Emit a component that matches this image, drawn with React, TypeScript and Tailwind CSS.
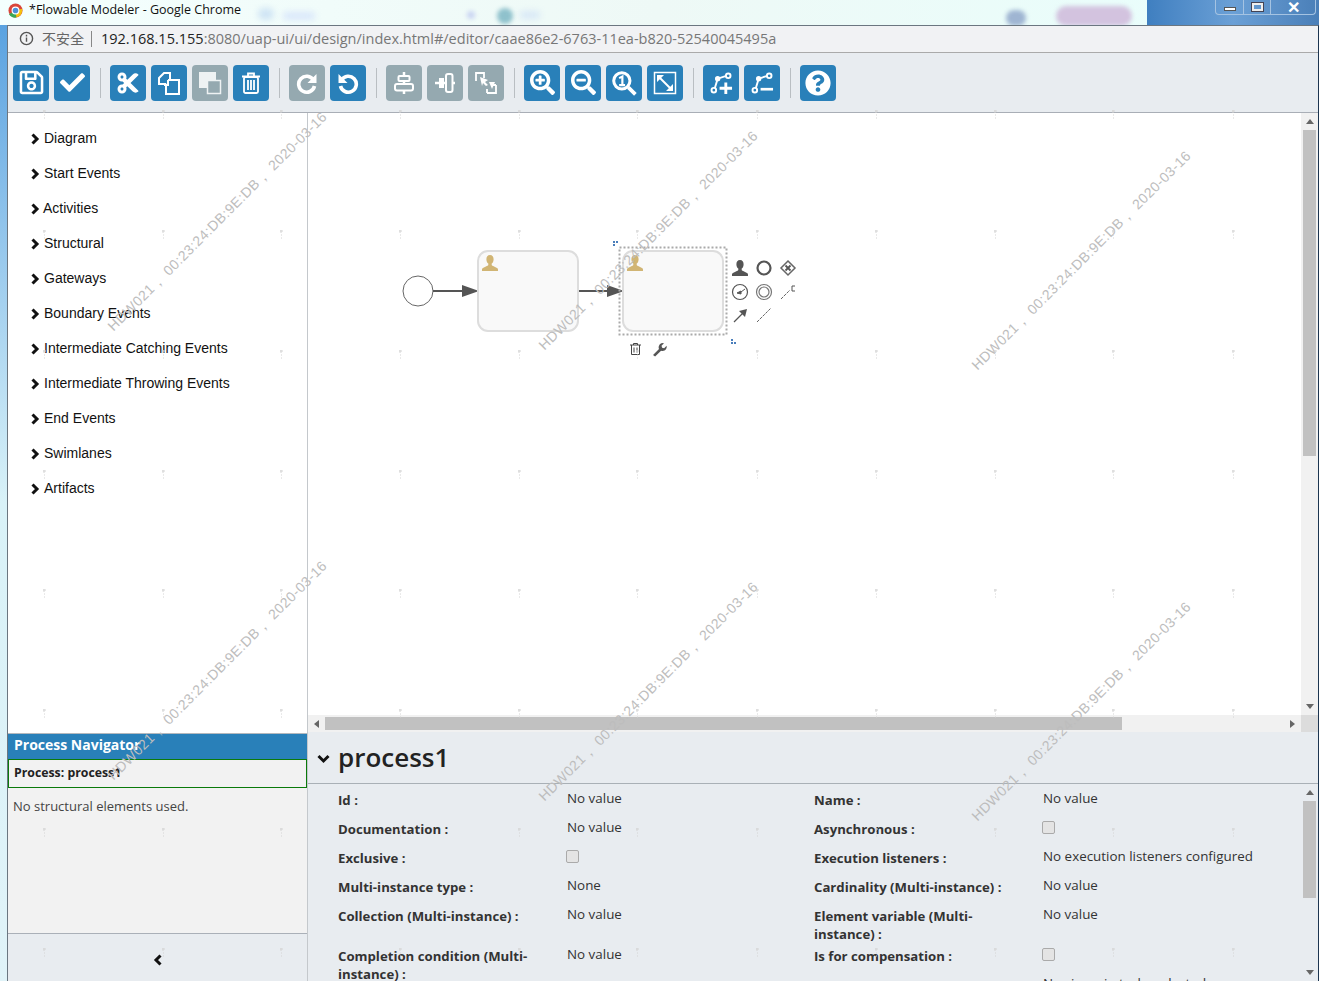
import React from "react";
import { FaRegSave, FaCheck, FaCut, FaSearchPlus, FaSearchMinus, FaQuestionCircle } from "react-icons/fa";

const Svg = ({ children, size = "w-6 h-6" }: { children: React.ReactNode; size?: string }) => (
    <svg viewBox="0 0 24 24" className={size} fill="none" stroke="white" strokeWidth="2">{children}</svg>
);

const Copy = () => (
    <Svg>
        <path d="M2 7l5-5h6v11H2z" />
        <path d="M11 9h11v14H9V13" fill="#2980b9" />
        <path d="M11 9v5H7" />
    </Svg>
);
const Paste = () => (
    <Svg>
        <rect x="1" y="1" width="17" height="16" fill="#eef2f3" stroke="none" />
        <rect x="9.500" y="9.500" width="13" height="13" fill="#95a9b0" strokeWidth="1.500" stroke="#eef2f3" />
    </Svg>
);
const Trash = () => (
    <Svg>
        <path d="M3 5.500h18M9 5V2.500h6V5" strokeWidth="1.800" />
        <rect x="5" y="6" width="14" height="16" rx="1.500" strokeWidth="1.800" />
        <path d="M9 9v10M12 9v10M15 9v10" strokeWidth="1.800" />
    </Svg>
);
const Redo = () => (
    <Svg>
        <path d="M18.500 9A8 8 0 1 0 19.500 15" strokeWidth="3.600" />
        <path d="M21.500 3v9h-9z" fill="white" stroke="none" />
    </Svg>
);
const Undo = () => (
    <Svg>
        <path d="M5.500 9A8 8 0 1 1 4.500 15" strokeWidth="3.600" />
        <path d="M2.500 3v9h9z" fill="white" stroke="none" />
    </Svg>
);
const AlignH = () => (
    <Svg>
        <path d="M12 1v22" strokeWidth="2.500" />
        <rect x="6.500" y="5" width="11" height="5" rx="1" fill="#95a9b0" strokeWidth="2" />
        <rect x="3" y="13" width="18" height="6.500" rx="2" fill="#95a9b0" strokeWidth="2" />
    </Svg>
);
const AlignV = () => (
    <Svg>
        <path d="M2 12h20" strokeWidth="2.500" />
        <rect x="6" y="7" width="5" height="10" fill="white" stroke="none" />
        <rect x="13" y="3" width="6.500" height="18" rx="2" fill="#95a9b0" strokeWidth="2" />
    </Svg>
);
const SameSize = () => (
    <Svg>
        <path d="M2 10V2h8v5M13 22v-4M22 14v8h-9M22 14h-5" strokeWidth="1.800" />
        <path d="M6 6l8 3-3 2 3 3-2 1-3-3-1 3zM18 18l-3-7h6z" fill="white" stroke="none" />
    </Svg>
);
const ZoomOne = () => (
    <svg viewBox="0 0 24 24" className="h-[26px] w-[26px]" fill="none" stroke="white" strokeWidth="2.800">
        <circle cx="10" cy="10" r="7.500" />
        <path d="M16 16l6.500 6.500" strokeWidth="3.400" />
        <path d="M7.500 7.500l3-1.500V14M7.500 14h5.500" strokeWidth="2" />
    </svg>
);
const ZoomFit = () => (
    <Svg>
        <rect x="1.500" y="1.500" width="21" height="21" strokeWidth="1.500" />
        <path d="M6 6l12 12" strokeWidth="2" />
        <path d="M4 4h7l-7 7zM20 20h-7l7-7z" fill="white" stroke="none" />
    </Svg>
);
const Bend = ({ minus }: { minus?: boolean }) => (
    <Svg size="h-[23px] w-[23px]">
        <circle cx="19" cy="5" r="2.400" />
        <circle cx="4" cy="20" r="2.400" />
        <circle cx="8" cy="8" r="1.800" fill="white" />
        <path d="M5 18L8 8l9-3" />
        {minus ? <path d="M10 19h13" strokeWidth="2.800" /> : <path d="M10 18h13M16.500 12v12" strokeWidth="3" />}
    </Svg>
);

const Chevron = ({ dir, className }: { dir: "r" | "l" | "d"; className: string }) => {
    const d = { r: "M2.500 1.500L7 6l-4.500 4.500", l: "M7.500 1.500L3 6l4.500 4.500", d: "M1 3l5 5 5-5" }[dir];
    return (
        <svg viewBox={dir === "d" ? "0 0 12 11" : "0 0 10 12"} className={className} fill="none" stroke="#111" strokeWidth="3">
            <path d={d} />
        </svg>
    );
};

const toolbar: { icon: React.ReactNode; off?: boolean }[][] = [
    [{ icon: <FaRegSave size={27} /> }, { icon: <FaCheck size={25} /> }],
    [{ icon: <FaCut size={24} /> }, { icon: <Copy /> }, { icon: <Paste />, off: true }, { icon: <Trash /> }],
    [{ icon: <Redo />, off: true }, { icon: <Undo /> }],
    [{ icon: <AlignH />, off: true }, { icon: <AlignV />, off: true }, { icon: <SameSize />, off: true }],
    [{ icon: <FaSearchPlus size={25} /> }, { icon: <FaSearchMinus size={25} /> }, { icon: <ZoomOne /> }, { icon: <ZoomFit /> }],
    [{ icon: <Bend /> }, { icon: <Bend minus /> }],
    [{ icon: <FaQuestionCircle size={26} /> }],
];

const palette = [
    "Diagram", "Start Events", "Activities", "Structural", "Gateways", "Boundary Events",
    "Intermediate Catching Events", "Intermediate Throwing Events", "End Events", "Swimlanes", "Artifacts",
];

function Check() {
    return <span className="-ml-px mt-[3px] block h-[13px] w-[13px] rounded-[2px] border border-[#aaa] bg-[#e4e4e4]" />;
}

const leftProps: [string, React.ReactNode, string][] = [
    ["Id :", "No value", "h-[29px]"],
    ["Documentation :", "No value", "h-[29px]"],
    ["Exclusive :", <Check />, "h-[29px]"],
    ["Multi-instance type :", "None", "h-[29px]"],
    ["Collection (Multi-instance) :", "No value", "h-[40px]"],
    ["Completion condition (Multi-instance) :", "No value", "h-[45px]"],
];
const rightProps: [string, React.ReactNode, string][] = [
    ["Name :", "No value", "h-[29px]"],
    ["Asynchronous :", <Check />, "h-[29px]"],
    ["Execution listeners :", "No execution listeners configured", "h-[29px]"],
    ["Cardinality (Multi-instance) :", "No value", "h-[29px]"],
    ["Element variable (Multi-instance) :", "No value", "h-[40px]"],
    ["Is for compensation :", <Check />, "h-[29px]"],
    ["", "No signavio tasks selected", "h-[29px]"],
];

const PropColumn = ({ rows, className }: { rows: [string, React.ReactNode, string][]; className: string }) => (
    <div className={className}>
        {rows.map(([label, value, h]) => (
            <div key={label + h} className={`flex ${h}`}>
                <div className="w-[229px] pr-[30px] pt-[1px] text-[13.2px] font-bold leading-[18px] text-[#333]">{label}</div>
                <div className="-mt-[1px] flex-1 text-[13.4px] leading-[18px] text-[#333]">{value}</div>
            </div>
        ))}
    </div>
);

const marks = [
    "left-[66px] top-[211px]", "left-[497px] top-[230px]", "left-[930px] top-[250px]",
    "left-[66px] top-[660px]", "left-[497px] top-[681px]", "left-[930px] top-[701px]",
];

const dotXs = [44, 163, 281, 400, 519, 637, 757, 876, 995, 1113, 1233];
const dotYs = [111, 231, 351, 471, 590, 710, 829, 949];

const ScrollArrow = ({ dir }: { dir: "u" | "d" | "l" | "r" }) => {
    const pts = { u: "0,6 4,1 8,6", d: "0,1 8,1 4,6", l: "6,0 6,8 1,4", r: "1,0 1,8 6,4" }[dir];
    return (
        <svg viewBox="0 0 8 8" className="h-2 w-2">
            <polygon points={pts} fill="#666" />
        </svg>
    );
};

const Person = ({ x, y, fill }: { x: number; y: number; fill: string }) => (
    <g transform={`translate(${x} ${y})`} fill={fill}>
        <path d="M8 0c2.400 0 3.600 1.800 3.600 4.200 0 2-.9 3.600-1.900 4.400v1.400c0 1 4.300 1.700 6 3.600 .4.5.3 1.400.3 2.400H0c0-1-.1-1.900.3-2.400 1.700-1.900 6-2.600 6-3.600V8.600c-1-.8-1.900-2.400-1.900-4.400C4.400 1.800 5.600 0 8 0z" />
    </g>
);

const Diagram = () => (
    <svg viewBox="390 230 420 140" className="absolute left-[82px] top-[117px] h-[140px] w-[420px]" fill="none">
        <circle cx="418" cy="291" r="15" stroke="#666" strokeWidth="1" fill="white" />
        <path d="M433 291h30M578 291h30" stroke="#555" strokeWidth="2" />
        <path d="M462 285l17 6-17 6zM607 285l17 6-17 6z" fill="#555" />
        <rect x="478" y="251" width="100" height="80" rx="10" fill="#f9f9f9" stroke="#ddd" strokeWidth="2" />
        <rect x="623" y="251" width="100" height="80" rx="10" fill="#f9f9f9" stroke="#ddd" strokeWidth="2" />
        <Person x={482} y={255} fill="#d1b574" />
        <Person x={627} y={255} fill="#d1b574" />
        <rect x="619.500" y="247.500" width="107" height="87" stroke="#aaa" strokeWidth="2" strokeDasharray="2 2" />
        <path d="M613 241h2v2h-2zM616 241h2v2h-2zM613 244h2v2h-2zM731 339h2v2h-2zM731 342h2v2h-2zM734 342h2v2h-2z" fill="#4a7ebb" />
        <Person x={732} y={260} fill="#555" />
        <circle cx="764" cy="268" r="6.500" stroke="#555" strokeWidth="2.200" />
        <path d="M788 261l7 7-7 7-7-7z" stroke="#666" strokeWidth="1.500" />
        <path d="M785.500 265.500l5 5M790.500 265.500l-5 5" stroke="#555" strokeWidth="1.800" />
        <circle cx="740" cy="292" r="7.500" stroke="#555" strokeWidth="1.200" />
        <path d="M737 293l4-2v3zM741 292l4-3" fill="#555" stroke="#555" />
        <circle cx="764" cy="292" r="7.500" stroke="#777" strokeWidth="1.200" />
        <circle cx="764" cy="292" r="5" stroke="#777" strokeWidth="1.200" />
        <path d="M781 299l9-9" stroke="#666" strokeWidth="1" strokeDasharray="3 1" />
        <path d="M795 286h-3v5h3" stroke="#555" strokeWidth="1" />
        <path d="M734 322l10-10" stroke="#555" strokeWidth="1.200" />
        <path d="M747 309l-8 2 6 6z" fill="#555" />
        <path d="M757 322l14-14" stroke="#666" strokeWidth="1" strokeDasharray="3 1" />
        <path d="M630 345h11M633.500 345v-1.500h4v1.500M631.500 345v9.500h8V345M634 347.500v5M637 347.500v5" stroke="#444" strokeWidth="1" />
        <path d="M653 355l6-6c-1-2 0-5 3-6l2 .2-2.500 2.500.6 2 2 .6 2.500-2.500c.6 3-1.500 6-5.500 5l-6 5.700z" fill="#555" />
    </svg>
);

export default function App() {
    return (
        <div className="relative h-[981px] w-[1319px] overflow-hidden bg-[#e6f6f8] font-['Liberation_Sans',sans-serif] text-[#333]">
            {/* title bar */}
            <div className="relative flex h-[25px] items-start overflow-hidden bg-gradient-to-r from-[#f4fffe] via-[#eef9f6] to-[#e8fffd] pt-[3px]">
                <span className="absolute left-[258px] top-[8px] h-3 w-4 rounded-full bg-[#cfe4f4] blur-[3px]" />
                <span className="absolute left-[283px] top-[12px] h-2 w-8 rounded-full bg-[#d9e7fa] blur-[3px]" />
                <span className="absolute left-[497px] top-[8px] h-4 w-4 rounded-full bg-[#8fc1cc] blur-[2px]" />
                <span className="absolute left-[520px] top-[11px] h-2 w-5 rounded-full bg-[#d8e8f6] blur-[3px]" />
                <span className="absolute left-[467px] top-[11px] h-2 w-2 rounded-full bg-[#c9d4f2] blur-[2px]" />
                <span className="absolute left-[1006px] top-[10px] h-4 w-5 rounded-full bg-[#9fb5d2] blur-[2px]" />
                <span className="absolute left-[1056px] top-[6px] h-5 w-[76px] rounded-full bg-[#d3c3df] blur-[2px]" />
                <svg viewBox="0 0 16 16" className="relative ml-[8px] h-[15px] w-[15px] shrink-0">
                    <circle cx="8" cy="8" r="7.500" fill="#d9463b" />
                    <path d="M8 8L1 12a8 8 0 0 0 8 3.500z" fill="#3aa655" />
                    <path d="M8 8l7-2a8 8 0 0 1-6 9.500z" fill="#f4c20d" />
                    <circle cx="8" cy="8" r="3.600" fill="#4d90d8" stroke="white" strokeWidth="1.200" />
                </svg>
                <span className="relative ml-[6px] whitespace-nowrap font-['Open_Sans',sans-serif] text-[12.5px] leading-[13px] text-[#111]">*Flowable Modeler - Google Chrome</span>
                <div className="absolute right-0 top-0 flex h-[25px] w-[172px] justify-end bg-gradient-to-r from-[#3f7fc0] via-[#6ba0d6] to-[#4a7fb8]">
                    <div className="mr-[3px] flex h-[15px] items-start rounded-b-[4px] border border-t-0 border-[#a5c3e2]">
                        <span className="flex h-[14px] w-[28px] items-center justify-center border-r border-[#a5c3e2]"><span className="mt-1 h-[4px] w-3 border border-[#555] bg-white" /></span>
                        <span className="flex h-[14px] w-[27px] items-center justify-center border-r border-[#a5c3e2]"><span className="h-2 w-[11px] border-2 border-[#eee] outline outline-1 outline-[#445]" /></span>
                        <span className="flex h-[14px] w-[44px] items-center justify-center text-[16px] font-bold leading-[13px] text-white">✕</span>
                    </div>
                </div>
            </div>

            <div className="flex h-[956px]">
                <div className="w-[7px] shrink-0 bg-gradient-to-b from-[#5aa2e0] via-[#d9f2f8] to-[#e0f3f8]" />
                <div className="flex min-w-0 flex-1 flex-col border-l border-r border-t border-[#6b7680] border-r-[#1c3550]">
                    {/* address bar */}
                    <div className="flex h-[27px] shrink-0 items-center border-b border-[#aaa] bg-[#f1f2f4] pb-[1px] pl-[11px]">
                        <svg viewBox="0 0 16 16" className="h-[15px] w-[15px]" fill="none" stroke="#555" strokeWidth="1.500">
                            <circle cx="8" cy="8" r="6.500" />
                            <path d="M8 7v4.500M8 4v1.800" />
                        </svg>
                        <span className="ml-[8px] font-['Noto_Sans_CJK_SC',sans-serif] text-[14px] text-[#666]">不安全</span>
                        <span className="ml-[7px] h-4 w-px bg-[#888]" />
                        <span className="ml-[9px] whitespace-nowrap font-['Open_Sans',sans-serif] text-[14.5px] text-[#777]"><span className="text-[#222]">192.168.15.155</span>:8080/uap-ui/ui/design/index.html#/editor/caae86e2-6763-11ea-b820-52540045495a</span>
                    </div>

                    {/* toolbar */}
                    <div className="flex h-[60px] shrink-0 items-center border-b border-[#a9aeb6] bg-[#e8ecf0] pl-[5px]">
                        {toolbar.map((group, i) => (
                            <React.Fragment key={i}>
                                {i > 0 && <span className="ml-[10px] mr-[9px] h-[30px] w-px bg-[#b9bec2]" />}
                                <div className="flex gap-[5px]">
                                    {group.map((b, j) => (
                                        <button key={j} className={`flex h-9 w-9 items-center justify-center rounded-[4px] text-white ${b.off ? "bg-[#95a9b0]" : "bg-[#2980b9]"}`}>
                                            {b.icon}
                                        </button>
                                    ))}
                                </div>
                            </React.Fragment>
                        ))}
                    </div>

                    <div className="flex min-h-0 flex-1">
                        {/* left column */}
                        <div className="flex w-[300px] shrink-0 flex-col border-r border-[#c4c8cc]">
                            <div className="h-[620px] shrink-0 bg-white pt-[8px]">
                                {palette.map((p) => (
                                    <div key={p} className="flex h-[35px] items-center pl-[22px] text-[14px] text-[#111]">
                                        <Chevron dir="r" className={`h-[12px] w-[10px] ${p === "Activities" ? "mr-[3px]" : "mr-[4px]"}`} />
                                        {p}
                                    </div>
                                ))}
                            </div>
                            <div className="flex h-[26px] shrink-0 items-start border-t border-[#b3b8bd] bg-[#2980b9] pl-[6px] font-['Open_Sans',sans-serif] text-[14px] font-bold leading-[22px] text-white">Process Navigator</div>
                            <div className="flex h-[29px] shrink-0 items-center border border-[#0a7a0a] bg-[#f2f2f2] pl-[5px] font-['Open_Sans',sans-serif] text-[12.3px] font-bold text-[#222]">Process: process1</div>
                            <div className="h-[145px] shrink-0 bg-[#f2f2f2] pl-[5px] pt-[9px] font-['Open_Sans',sans-serif] text-[13px] text-[#444]">No structural elements used.</div>
                            <div className="flex flex-1 justify-center border-t border-[#aab0b8] bg-[#e8ecf0] pt-[20px]">
                                <Chevron dir="l" className="h-[12px] w-[10px]" />
                            </div>
                        </div>

                        {/* right column */}
                        <div className="flex min-w-0 flex-1 flex-col">
                            <div className="relative flex h-[619px] shrink-0 flex-col">
                                <div className="flex min-h-0 flex-1">
                                    <div className="relative flex-1 bg-white"><Diagram /></div>
                                    <div className="flex w-[17px] flex-col items-center bg-[#f1f1f1]">
                                        <div className="flex h-[17px] items-center"><ScrollArrow dir="u" /></div>
                                        <div className="h-[326px] w-[13px] bg-[#c1c1c1]" />
                                        <div className="flex-1" />
                                        <div className="flex h-[17px] items-center"><ScrollArrow dir="d" /></div>
                                    </div>
                                </div>
                                <div className="flex h-[17px] shrink-0 items-center bg-[#f1f1f1]">
                                    <div className="flex w-[17px] justify-center"><ScrollArrow dir="l" /></div>
                                    <div className="h-[13px] w-[797px] bg-[#c1c1c1]" />
                                    <div className="flex-1" />
                                    <div className="flex w-[17px] justify-center"><ScrollArrow dir="r" /></div>
                                    <div className="h-[17px] w-[17px] bg-[#dcdcdc]" />
                                </div>
                            </div>

                            <div className="flex min-h-0 flex-1 flex-col bg-[#e8ecf0]">
                                <div className="flex h-[52px] shrink-0 items-center border-b border-[#a9b0b6] pb-[1px] pl-[9px]">
                                    <Chevron dir="d" className="mt-[3px] h-[11px] w-[13px]" />
                                    <span className="ml-[8px] font-['Open_Sans',sans-serif] text-[26px] font-semibold text-[#222]">process1</span>
                                </div>
                                <div className="flex min-h-0 flex-1 overflow-hidden">
                                    <div className="flex flex-1 overflow-hidden pl-[30px] pt-[6px] font-['Open_Sans',sans-serif]">
                                        <PropColumn rows={leftProps} className="w-[476px] shrink-0" />
                                        <PropColumn rows={rightProps} className="w-[480px] shrink-0" />
                                    </div>
                                    <div className="flex w-[17px] shrink-0 flex-col items-center">
                                        <div className="flex h-[17px] items-center"><ScrollArrow dir="u" /></div>
                                        <div className="h-[97px] w-[13px] bg-[#c1c1c1]" />
                                        <div className="flex-1" />
                                        <div className="flex h-[17px] items-center"><ScrollArrow dir="d" /></div>
                                    </div>
                                </div>
                            </div>
                        </div>
                    </div>
                </div>
            </div>

            {/* watermark overlay */}
            <div className="pointer-events-none absolute inset-0 overflow-hidden">
                {marks.map((m) => (
                    <span key={m} className={`absolute ${m} -rotate-[45deg] whitespace-nowrap font-['Liberation_Sans',sans-serif] text-[14px] tracking-[0.45px] text-[#bdbdbd]`}>
                        HDW021， 00:23:24:DB:9E:DB， 2020-03-16
                    </span>
                ))}
                <svg className="absolute inset-0 h-[981px] w-[1319px]">
                    {dotYs.flatMap((y) =>
                        dotXs.map((x) => (
                            <path key={`${x}-${y}`} d={`M${x - 1} ${y}h3M${x} ${y - 1}v3M${x} ${y + 4}h1M${x} ${y + 7}h1`} stroke="#d4d4d4" strokeWidth="1" />
                        ))
                    )}
                </svg>
            </div>
        </div>
    );
}
